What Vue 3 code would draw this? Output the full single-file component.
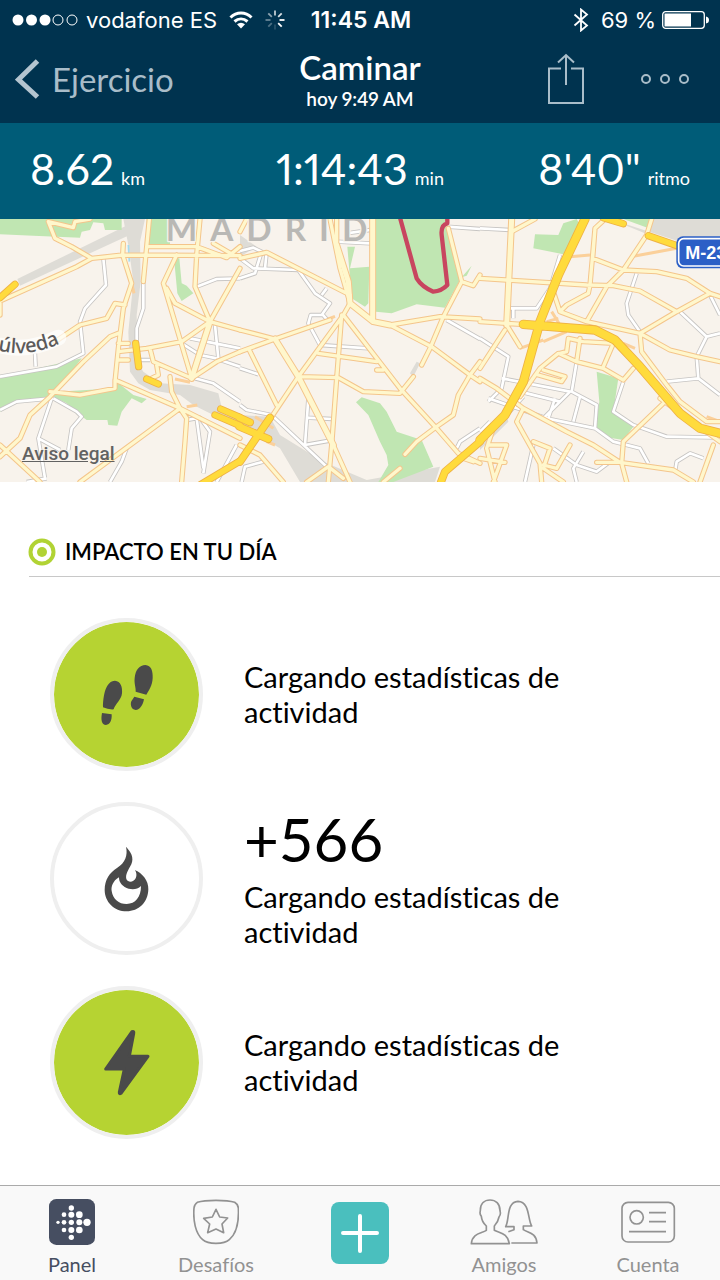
<script setup>
// Map geometry: each group is shifted horizontally by x.
const parks = [
  { x: 0, d: 'M0 12H365V45H315L310 25 280 22 270 45 245 50 240 68 100 62 0 58ZM440 12H510V90H440ZM522 130H538L545 205 560 212 580 235 545 258 532 235ZM0 490L90 465 245 430 170 530 350 520V500L400 540 440 552 425 565 395 550 365 590 352 632 325 630 322 615 260 615 240 600 200 565 160 545 60 560 0 590Z' },
  { x: 720, d: 'M322 95H345L330 160 388 155 385 265 375 275 335 250ZM408 12H620L660 195 615 278 530 268 455 295 408 290ZM348 562L365 547 420 565 440 590 470 650 545 675 580 755 460 801H415L445 750 440 720 420 680 385 600ZM665 187L695 152 680 182Z' },
  { x: 1440, d: 'M235 60L250 25 290 12 300 30 250 118 160 100 165 58ZM430 12H510L502 38ZM350 470L415 490 400 590 460 635 430 675 370 665 345 640 358 560Z' },
]

const areas = [
  { x: 0, d: 'M400 22L410 50 60 212 52 192ZM370 12H435L420 80 422 200 410 300 412 440 430 470 480 505 570 510 655 535 668 590 720 612V640L640 600 580 570 540 540 450 525 415 505 390 470 385 350 400 200 385 90Z' },
  { x: 720, d: 'M0 60L50 95 0 125ZM0 600L90 605 120 660 250 740 380 795 600 755 585 801H180L120 700 0 630ZM540 445L520 485 510 475 530 440Z' },
  { x: 1440, d: 'M390 12L502 58 515 12H720V110L600 80ZM0 690L80 600 85 620 0 705Z' },
]

const minorRoads = [
  { x: 0, d: 'M310 130L318 210 255 280 240 320 250 415 170 455 0 485M430 200V280L410 340V380M105 415L107 455M590 215L650 192 720 190M0 585L50 560 155 550 115 670 180 705M205 705L215 640 245 605 230 590 160 550M115 670L135 790M80 801L140 790M380 700L365 740 330 801M545 385L600 420 650 430M570 370L720 400M645 330L655 430M585 490L640 505 720 560M590 610L610 760M560 615L600 608 630 650 610 775M710 690L650 801M660 435L720 455M420 435H450' },
  { x: 720, d: 'M0 130L40 160 175 165 225 235 270 265 245 300 212 300 205 325 240 390 385 400M0 190L45 175 65 110 40 98 0 108M80 112L75 160M260 220L245 240M245 295L262 315M0 570L20 585 95 600 260 755M205 550L195 690 280 675M200 608L275 612M0 460L55 478M290 80L390 85M320 55L390 45M620 35L720 42M620 315L720 372M650 700L660 680 720 640M5 801L15 755 70 740' },
  { x: 1440, d: 'M0 40L90 45M240 120L210 220 170 280 90 280M100 280V310M470 175L440 265 445 300 480 350M0 370L85 425 65 520 25 560M290 440L275 530 350 570 345 640 400 680 480 700 505 745M430 500L400 590 460 630 560 665 720 668M690 240L720 300M600 290L680 365 650 425 655 490 560 500M680 365L720 355M655 490L720 540M65 490L270 530 190 610M25 550L200 610 345 640M225 550L205 610M300 545L280 620M120 530L240 560M80 600L130 545M220 700L290 750 350 770 390 740M310 710L280 760 290 801M160 690L135 801M0 650L30 620M585 770L590 740 630 715 670 730' },
]

const majorRoads = [
  { x: 0, d: 'M145 20L165 70 215 95 275 130 230 155 0 258M145 20L220 38 225 20 270 12M275 130L370 120 720 122M370 85L368 120 395 205 370 280 355 400 345 500M0 300V260M165 380L240 330 320 310 345 265 375 270M355 355L330 365 250 440 150 545 90 600 60 670 0 725M150 530L240 540 345 520V495L540 580 720 670M540 580L240 801M540 580L560 610 555 680 545 801M0 690L120 801M448 12L430 200M445 95L590 95 680 128 720 95M530 120L490 205 575 490M600 12L590 120 585 215 630 320 575 490 650 440 720 410M500 220L525 265 630 320 720 160M640 85L700 120M630 320L720 345M440 400L545 380 630 320M450 400L460 440 575 490M470 450L475 480 455 490M355 410L440 400M355 385H385M355 435H385M510 485L515 530 540 580' },
  { x: 720, d: 'M0 130L80 112 330 240M270 12L300 160 330 265M290 12L290 90 325 200 330 265 400 320 450 330 600 305 720 312M398 12L400 310M0 50L20 12M0 345L105 372 175 485 280 690 330 801M0 410L105 372 270 315M310 300L175 485 95 605M305 300L290 490 275 690 265 801M310 300L480 520 590 640 655 715M330 265L310 300M450 330L575 395 690 480 720 500M625 40L665 200 610 305 570 400 545 450M665 200L700 212 720 180M235 415L410 440M410 465H430M180 485L295 488 370 530 480 535 520 485M28 405L110 570M720 440L690 480 655 540 640 600 590 635 530 680 495 718M480 760L430 801M0 690L60 720 130 801M200 801L265 755 310 790M655 715L720 745M670 730L700 740' },
  { x: 1440, d: 'M95 12L80 330M0 190L320 210 400 212 480 228 590 290 690 235M95 50L165 12M345 40L338 130 430 165 530 170 620 190 690 235 720 245M375 12L345 40 330 210 325 235 260 270 240 290M515 12L500 60 430 165 380 215 320 320M220 230L240 290 320 320 480 355 590 290M0 320L125 328M80 330L120 395M75 345L0 460M480 355L570 405 650 425 720 440M480 355L485 410 560 510 600 560 680 620H720M120 545L180 460 235 415 290 440 370 460 430 495 460 460M240 415L260 410 265 370 310 380 400 385 370 455M300 370L290 440M0 490L50 520 130 580 260 650 340 690 420 742 580 765 640 801M350 742H425M550 565L430 680 425 745 440 801M540 550L720 680M700 690L660 801M130 580L110 620 180 745 185 801M40 640L20 700 45 801M0 730L75 742M30 690L80 690 40 801M160 680L210 700 190 760 250 801M270 690L230 760 190 750M190 465L255 485 245 500 175 480' },
]

const ramps = [
  { x: 0, d: 'M395 205L402 235M525 492L570 502M560 575L592 570' },
  { x: 720, d: 'M45 605L100 640M80 680L105 690M285 304L265 312' },
  { x: 1440, d: 'M270 125L330 120M460 124L590 100M215 290L240 330M190 380L260 350M120 400L190 375M430 385L465 400M680 605L720 620M200 320L235 310' },
]

const highways = [
  { x: 0, w: 18, d: 'M0 248L45 208M407 385L416 455M440 492L475 507M645 600L720 632M662 582L720 607M600 810L720 738' },
  { x: 720, w: 20, d: 'M-2 608L30 622M-2 635L85 672M90 608L0 740M603 801L615 770 720 680' },
  { x: 1440, w: 24, d: 'M315 12L235 180 180 320 130 500 75 600 0 675M130 328L345 345 405 375 480 455 600 595 660 640 720 655' },
  { x: 1440, w: 18, d: 'M370 8L430 26M505 62L600 95' },
]

const stats = [
  { value: '8.62', unit: 'km' },
  { value: '1:14:43', unit: 'min' },
  { value: '8\'40"', unit: 'ritmo' },
]

const impacts = [
  { icon: 'steps', filled: true, text: 'Cargando estadísticas de actividad' },
  { icon: 'flame', filled: false, value: '+566', text: 'Cargando estadísticas de actividad' },
  { icon: 'bolt', filled: true, text: 'Cargando estadísticas de actividad' },
]

const dots = [
  [64, 27, 8], [42, 47, 7], [64, 47, 9], [88, 47, 10],
  [24, 70, 5], [42, 70, 7], [64, 70, 8], [88, 70, 9], [111, 70, 11],
  [42, 93, 7], [64, 93, 9], [88, 93, 10], [64, 115, 8],
]

const spokes = [0, 45, 90, 135, 180, 225, 270, 315]
const spokeOpacity = [0.75, 0.85, 1, 1, 0.15, 0.3, 0.4, 0.55]
</script>

<template>
  <div class="screen">
    <header class="top">
      <div class="status">
        <div class="carrier">
          <svg width="66" height="14" viewBox="0 0 66 14" aria-hidden="true">
            <g fill="#fff"><circle cx="6" cy="7" r="5.500" /><circle cx="19.500" cy="7" r="5.500" /><circle cx="33" cy="7" r="5.500" /></g>
            <g fill="none" stroke="#fff"><circle cx="46" cy="7" r="5" /><circle cx="60" cy="7" r="5" /></g>
          </svg>
          <span>vodafone ES</span>
          <svg class="wifi" width="24" height="18" viewBox="0 0 24 18" fill="none" stroke="#fff" stroke-width="3" aria-hidden="true">
            <path d="M1.500 6.500C7.500.5 16.500.5 22.500 6.500M5.500 10.500c4-3.500 9-3.500 13 0" />
            <path d="M12 17.500l-4-4.200c2.500-2 5.500-2 8 0z" fill="#fff" stroke="none" />
          </svg>
          <svg width="20" height="20" viewBox="-10 -10 20 20" stroke="#fff" stroke-width="1.800" aria-hidden="true">
            <path v-for="(a, i) in spokes" :key="a" d="M0-4.500V-9.500" :transform="`rotate(${a})`" :opacity="spokeOpacity[i]" />
          </svg>
        </div>
        <strong class="clock">11:45 AM</strong>
        <div class="power">
          <svg width="16" height="24" viewBox="0 0 16 24" fill="none" stroke="#fff" stroke-width="1.800" aria-hidden="true">
            <path d="M1.500 6.500l12.500 11L8 22.500v-21l6 5-12.500 11" />
          </svg>
          <span>69 %</span>
          <svg width="48" height="18" viewBox="0 0 48 18" aria-hidden="true">
            <rect x=".7" y=".7" width="41.600" height="16.600" rx="3" fill="none" stroke="#fff" stroke-width="1.300" />
            <path d="M2.500 2.500H29v13H2.500zM44 5.500q3 .5 3 3.500t-3 3.500z" fill="#fff" />
          </svg>
        </div>
      </div>
      <div class="nav">
        <button class="back" type="button">
          <svg width="25" height="40" viewBox="0 0 25 40" fill="none" stroke="#b4c5d0" stroke-width="5" aria-hidden="true"><path d="M22.500 2L3.500 20.500l19 17.500" /></svg>
          <span>Ejercicio</span>
        </button>
        <div class="title">
          <h1>Caminar</h1>
          <p>hoy 9:49 AM</p>
        </div>
        <div class="actions">
          <button type="button" aria-label="Compartir">
            <svg width="36" height="52" viewBox="0 0 36 52" fill="none" stroke="#a9bdc9" stroke-width="2" aria-hidden="true"><path d="M13 15.500H1V50h34V15.500H23M18 32V2M10 9.500L18 2l8 7.500" /></svg>
          </button>
          <button type="button" aria-label="Más opciones">
            <svg width="50" height="12" viewBox="0 0 50 12" fill="none" stroke="#a9bdc9" stroke-width="2" aria-hidden="true"><circle cx="6" cy="6" r="4" /><circle cx="25" cy="6" r="4" /><circle cx="44" cy="6" r="4" /></svg>
          </button>
        </div>
      </div>
    </header>

    <section class="stats">
      <p v-for="s in stats" :key="s.unit"><span class="figure">{{ s.value }}</span><span class="unit">{{ s.unit }}</span></p>
    </section>

    <section class="map">
      <svg viewBox="0 12 2160 789" preserveAspectRatio="xMidYMid slice" fill="none" stroke-linejoin="round">
        <rect y="0" width="2160" height="810" fill="#f8f3ec" />
        <path v-for="p in areas" :key="'a' + p.x" :d="p.d" :transform="`translate(${p.x})`" fill="#dedcd6" />
        <path v-for="p in parks" :key="'p' + p.x" :d="p.d" :transform="`translate(${p.x})`" fill="#c0e6b2" />
        <path d="M385 90L388 140" stroke="#a4dcf0" stroke-width="5" />
        <path v-for="p in minorRoads" :key="'mc' + p.x" :d="p.d" :transform="`translate(${p.x})`" stroke="#c6c4c2" stroke-width="13" />
        <path v-for="p in minorRoads" :key="'mf' + p.x" :d="p.d" :transform="`translate(${p.x})`" stroke="#fff" stroke-width="8" />
        <path v-for="p in ramps" :key="'r' + p.x" :d="p.d" :transform="`translate(${p.x})`" stroke="#fbd09a" stroke-width="9" />
        <g stroke-linecap="round">
          <path v-for="p in majorRoads" :key="'Mc' + p.x" :d="p.d" :transform="`translate(${p.x})`" stroke="#f4c58b" stroke-width="16" />
          <path d="M1010 90L1045 200 1050 265 1120 320 1170 330M1118 12V310M1535 12L1520 330M630 320L575 490M825 372L895 485 1000 690" stroke="#f4c58b" stroke-width="21" />
          <path v-for="p in majorRoads" :key="'Mf' + p.x" :d="p.d" :transform="`translate(${p.x})`" stroke="#fff7cc" stroke-width="10" />
          <path d="M1010 90L1045 200 1050 265 1120 320 1170 330M1118 12V310M1535 12L1520 330M630 320L575 490M825 372L895 485 1000 690" stroke="#fff7cc" stroke-width="15" />
          <path v-for="(p, i) in highways" :key="'hc' + i" :d="p.d" :transform="`translate(${p.x})`" stroke="#eeb144" :stroke-width="p.w + 4" />
          <path v-for="(p, i) in highways" :key="'hf' + i" :d="p.d" :transform="`translate(${p.x})`" stroke="#ffdb3c" :stroke-width="p.w - 1" />
        </g>
        <path d="M1200 8L1250 190Q1265 215 1300 230 1325 228 1342 210L1325 60Q1322 30 1342 25V8" stroke="#c8455f" stroke-width="13" />
        <path id="street" d="M-42 395Q75 440 190 380" />
        <path d="M5 392Q85 412 175 368" stroke="#fff" stroke-width="48" stroke-linecap="round" opacity=".7" />
        <text class="city" x="497" y="79">MADRID</text>
        <text class="street"><textPath href="#street">púlveda</textPath></text>
        <rect x="2029" y="64" width="180" height="96" rx="20" fill="#2c5fc6" />
        <rect x="2036" y="71" width="180" height="82" rx="15" stroke="#fff" stroke-width="5" fill="#2c5fc6" />
        <text class="shield" x="2056" y="131">M-23</text>
      </svg>
      <a class="legal" href="#">Aviso legal</a>
    </section>

    <main class="impact">
      <h2>
        <svg width="28" height="28" viewBox="0 0 28 28" aria-hidden="true"><circle cx="14" cy="14" r="11.500" fill="none" stroke="#b1d334" stroke-width="4" /><circle cx="14" cy="14" r="5" fill="#b1d334" /></svg>
        <span>IMPACTO EN TU DÍA</span>
      </h2>
      <ul>
        <li v-for="item in impacts" :key="item.icon">
          <div class="badge" :class="{ filled: item.filled }">
            <svg v-if="item.icon === 'steps'" width="54" height="62" viewBox="300 430 162 186" fill="#4a4a4a" aria-hidden="true">
              <path d="M309 560C309 525 317 481 345 480 362 481 368 500 366 518 364 538 346 550 341 566Q324 567 309 560ZM306 577L335 581C336 600 330 612 318 613 305 612 302 598 306 577ZM407 513C408 500 402 490 404 472 406 448 419 433 436 433 454 434 459 452 458 472 457 496 447 508 439 522ZM403 528L432 536C429 552 420 568 407 568 394 567 390 552 394 542Z" />
            </svg>
            <svg v-else-if="item.icon === 'flame'" width="46" height="66" viewBox="222 167 138 198" aria-hidden="true">
              <path fill="#4a4a4a" d="M288 169C302 184 313 201 304 222 294 241 286 252 289 266 294 277 310 277 317 264 322 253 318 243 314 239 337 248 356 271 355 297 354 337 326 363 290 363 252 363 224 334 224 298 224 269 238 247 262 232 285 218 294 195 288 169Z" />
              <path fill="#fff" d="M267 261C248 272 243 290 245 302 249 327 266 341 290 341 316 340 333 321 333 287 320 300 300 299 284 290 271 281 267 272 267 261Z" />
            </svg>
            <svg v-else width="48" height="68" viewBox="219 718 144 204" aria-hidden="true">
              <path d="M306 726Q313 723 311 732L298 800H354L273 911Q267 915 268 907L283 838H227Z" fill="#4a4a4a" stroke="#4a4a4a" stroke-width="9" stroke-linejoin="round" />
            </svg>
          </div>
          <div class="copy">
            <strong v-if="item.value">{{ item.value }}</strong>
            <p>{{ item.text }}</p>
          </div>
        </li>
      </ul>
    </main>

    <nav class="tabs">
      <a href="#" class="active">
        <svg width="46" height="46" viewBox="-3 0 138 138" aria-hidden="true">
          <rect x="-3" width="138" height="138" rx="22" fill="#464e61" />
          <circle v-for="(d, i) in dots" :key="i" :cx="d[0]" :cy="d[1]" :r="d[2]" fill="#fff" />
        </svg>
        <span>Panel</span>
      </a>
      <a href="#">
        <svg width="46" height="46" viewBox="579 58 138 138" fill="none" stroke="#929292" stroke-width="5" aria-hidden="true">
          <path d="M648 62C675 62 698 66 704 68Q714 74 715 85C717 122 710 161 688 180Q676 191 648 191T608 180C586 161 579 122 582 85Q583 74 592 68C598 66 621 62 648 62Z" />
          <path d="M648 89L659 112 683 115 666 133 671 159 648 148 623 159 629 133 611 116 637 112Z" stroke-linejoin="round" />
        </svg>
        <span>Desafíos</span>
      </a>
      <button type="button" aria-label="Añadir">
        <svg width="58" height="62" viewBox="0 0 58 62" aria-hidden="true"><rect width="58" height="62" rx="8" fill="#4abfbe" /><path d="M29 14v35M12 31h34" stroke="#fff" stroke-width="4" stroke-linecap="round" /></svg>
      </button>
      <a href="#">
        <svg width="68" height="46" viewBox="329 56 204 138" fill="none" stroke="#929292" stroke-width="5" stroke-linejoin="round" aria-hidden="true">
          <path d="M378 150V137C368 128 364 119 363 108 356 99 360 96 360 90 360 70 372 59 389 59S419 70 419 91C420 98 423 101 416 110 414 121 409 130 402 137V150C419 159 442 158 447 190H333C336 158 363 160 378 150Z" />
          <path d="M444 154L461 148V139H436C448 119 437 65 473 63 509 64 502 119 514 137H489V148C505 158 527 157 530 188H453" />
        </svg>
        <span>Amigos</span>
      </a>
      <a href="#">
        <svg width="56" height="46" viewBox="777 58 168 138" fill="none" stroke="#929292" stroke-width="5" aria-hidden="true">
          <rect x="783" y="68" width="157" height="119" rx="18" /><circle cx="827" cy="113" r="20" /><path d="M864 99H915M864 126H915M804 156H915" />
        </svg>
        <span>Cuenta</span>
      </a>
    </nav>
  </div>
</template>

<style>
body { margin: 0; background: #fff; }
</style>

<style scoped>
.screen { min-height: 100vh; display: flex; flex-direction: column; font-family: Lato, "Open Sans", sans-serif; font-variant-ligatures: none; font-variant-numeric: proportional-nums; color: #000; }
h1, h2, p, ul { margin: 0; padding: 0; }
svg { display: block; flex: none; }
button { border: 0; padding: 0; background: none; font: inherit; color: inherit; }
.top { background: #00334f; color: #fff; }
.status { height: 40px; padding: 0 10px 0 12px; display: grid; grid-template-columns: 1fr auto 1fr; align-items: center; font: 22px/40px Inter, Roboto, sans-serif; white-space: nowrap; }
.carrier, .power { display: flex; align-items: center; }
.carrier { gap: 8px; }
.carrier .wifi { margin: 0 4px; }
.clock { font-size: 23px; font-weight: 600; }
.power { justify-content: flex-end; gap: 6px; }
.power svg:first-child { margin-right: 6px; }
.nav { height: 78px; padding: 0 15px 5px; display: grid; grid-template-columns: 1fr auto 1fr; align-items: center; }
.back { display: flex; align-items: center; gap: 12px; color: #a9bdc9; font-size: 33px; line-height: 40px; }
.title { text-align: center; }
.title h1 { font-size: 33px; line-height: 40px; font-weight: 600; }
.title p { font-size: 19px; line-height: 24px; font-weight: 600; }
.actions { display: flex; justify-content: flex-end; align-items: center; gap: 56px; padding-right: 15px; }
.stats { padding: 18px 30px 22px; display: grid; grid-template-columns: 1fr auto 1fr; align-items: center; background: #005c78; color: #fff; }
.stats p { white-space: nowrap; }
.stats p:last-child { text-align: right; }
.figure { font-size: 43px; line-height: 56px; }
.unit { margin-left: 7px; font-size: 18px; }
.map { position: relative; height: 263px; overflow: hidden; }
.map > svg { width: 100%; height: 100%; }
.city { font: 700 100px Lato, sans-serif; letter-spacing: 39px; fill: #b9b8b5; stroke: #f8f3ec; stroke-width: 8px; paint-order: stroke; }
.street { font: 500 60px "Noto Sans", sans-serif; fill: #5c5a59; }
.shield { font: 700 54px "Liberation Sans", sans-serif; fill: #fff; }
.legal { position: absolute; left: 22px; bottom: 16px; font: 500 19px/24px Roboto, sans-serif; color: #626262; }
.impact { padding: 54px 0 24px 29px; }
.impact h2 { display: flex; align-items: center; gap: 9px; padding-bottom: 8px; border-bottom: 1px solid #c8c8c8; font-size: 22px; font-weight: 600; line-height: 32px; }
.impact h2 svg { margin-left: -1px; }
.impact ul { display: grid; gap: 31px; padding: 41px 24px 0 21px; list-style: none; }
.impact li { display: flex; align-items: center; gap: 41px; }
.badge { box-sizing: border-box; flex: none; width: 153px; height: 153px; border: 4px solid #efefef; border-radius: 50%; display: grid; place-items: center; }
.filled { background: #b6d332; background-clip: padding-box; }
.copy { max-width: 360px; padding-bottom: 2px; }
.copy strong { display: block; margin-bottom: 8px; font-size: 60px; line-height: 64px; font-weight: 400; font-variant-numeric: tabular-nums; }
.copy p { font-size: 29px; line-height: 35px; }
.tabs { box-sizing: border-box; height: 95px; margin-top: auto; display: grid; grid-template-columns: repeat(5, 1fr); align-items: center; justify-items: center; border-top: 1px solid #aaa; background: #f9f9f9; }
.tabs a { padding-top: 9px; display: flex; flex-direction: column; align-items: center; gap: 7px; color: #929292; font-size: 20px; line-height: 24px; text-decoration: none; }
.tabs .active { color: #464e61; }
</style>
